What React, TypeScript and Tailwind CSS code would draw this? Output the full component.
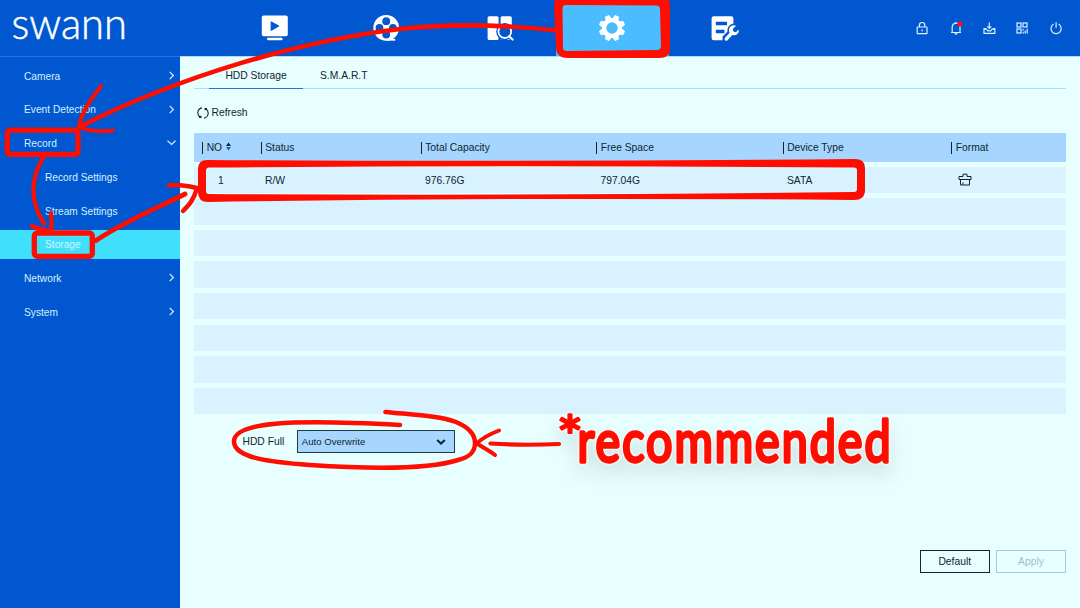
import type { ReactNode } from "react";

const FONT = "font-['Liberation_Sans',Arial,sans-serif]";

function PlayIcon() {
  return (
    <svg width="28" height="28" viewBox="0 0 28 28">
      <rect x="0.800" y="1.500" width="26" height="20.800" rx="1.800" fill="#fff" />
      <path d="M10.200 8v8.200l7.400-4.100z" fill="#0057d0" stroke="#0057d0" strokeWidth="1.200" strokeLinejoin="round" />
      <rect x="6" y="23.700" width="15.600" height="2.600" rx="1.200" fill="#fff" />
    </svg>
  );
}

function ReelIcon() {
  return (
    <svg width="28" height="28" viewBox="0 0 28 28">
      <circle cx="13.200" cy="13.800" r="12.900" fill="#fff" />
      <path d="M13.500 25h8.800v1.700h-8.800z" fill="#fff" />
      <g fill="#0057d0">
        <circle cx="13.200" cy="7.200" r="3.900" />
        <circle cx="13.200" cy="20.600" r="3.900" />
        <circle cx="6.500" cy="13.900" r="3.900" />
        <circle cx="19.900" cy="13.900" r="3.900" />
      </g>
    </svg>
  );
}

function SearchIcon() {
  return (
    <svg width="28" height="28" viewBox="0 0 28 28">
      <rect x="1.600" y="2.200" width="11" height="23.800" rx="1.600" fill="#fff" />
      <rect x="14.600" y="2.200" width="11.200" height="23.800" rx="1.600" fill="#fff" />
      <circle cx="18.800" cy="17.600" r="8.600" fill="#0057d0" />
      <path d="m24 23 4 4" stroke="#0057d0" strokeWidth="4.500" />
      <circle cx="18.800" cy="17.600" r="6.400" fill="none" stroke="#fff" strokeWidth="1.800" />
      <path d="m23.400 22.400 3.200 3.200" stroke="#fff" strokeWidth="2.100" strokeLinecap="round" />
    </svg>
  );
}

function GearIcon() {
  const angles = [22.5, 67.5, 112.5, 157.5, 202.5, 247.5, 292.5, 337.5];
  return (
    <svg width="28" height="28" viewBox="0 0 28 28">
      <g fill="#fff" stroke="#fff" strokeLinejoin="round" strokeWidth="1">
        {angles.map((a) => (
          <path key={a} d="M10.900 6 12.300 1.300h3.400L17.100 6z" transform={`rotate(${a} 14 14)`} />
        ))}
      </g>
      <circle cx="14" cy="14" r="7.900" fill="none" stroke="#fff" strokeWidth="4.400" />
    </svg>
  );
}

function MaintainIcon() {
  return (
    <svg width="30" height="28" viewBox="0 0 30 28">
      <path d="M3.800 2.200h17.400a2.200 2.200 0 0 1 2.200 2.200V9.500q-6.400 1.500-6 8.300L12.500 22.500v3.700H3.800a2.200 2.200 0 0 1-2.200-2.200V4.400a2.200 2.200 0 0 1 2.200-2.200z" fill="#fff" />
      <path d="M5.800 7.800H17v3.500H5.800zM5.800 15.800h8.700v3.500H5.800z" fill="#0057d0" />
      <path d="m16.300 25 5.500-6" stroke="#fff" strokeWidth="3.400" strokeLinecap="round" />
      <path d="M26 11.800a5 5 0 1 0 2.800 3.800l-2.900 2.600-2.600-.6-.5-2.600z" fill="#fff" />
    </svg>
  );
}

const NAV: { name: string; icon: ReactNode }[] = [
  { name: "Live", icon: <PlayIcon /> },
  { name: "Playback", icon: <ReelIcon /> },
  { name: "Search", icon: <SearchIcon /> },
  { name: "Setup", icon: <GearIcon /> },
  { name: "Maintenance", icon: <MaintainIcon /> },
];

function StatusIcons() {
  const common = {
    width: 14,
    height: 14,
    viewBox: "0 0 14 14",
    fill: "none",
    stroke: "#d8f4ff",
    strokeWidth: 1.2,
  };
  return (
    <div className="flex gap-[19.300px] pr-[17.500px]">
      <svg {...common}>
        <rect x="2.200" y="6" width="9.800" height="6.600" rx="0.700" />
        <path d="M4.400 6V4.200a2.700 2.700 0 0 1 5.400 0V6" />
        <path d="M7.100 8.400v1.800" strokeWidth="1.400" />
      </svg>
      <svg {...common}>
        <path d="M2 11.500h10M3.200 11.500V6a3.900 3.900 0 0 1 7.800 0v5.500M5.700 12.400q1.400 1.300 2.800 0M7.100 2V1" />
        <circle cx="10.800" cy="3.100" r="2.500" fill="#ff0d0d" stroke="none" />
      </svg>
      <svg {...common}>
        <path d="M4 7.500H2v4.800h10.800V7.500h-2M2.200 8.200h2.200l1.400 1.600h2.900L10.200 8.200h2.200" />
        <path d="M7.300 1.400v5.800M5.300 5.300l2 2 2-2" />
      </svg>
      <svg {...common}>
        <rect x="2" y="2" width="4" height="4" />
        <rect x="8" y="2" width="4" height="4" />
        <rect x="2" y="8" width="4" height="4" />
        <path d="M8.200 8v1.500M8.200 10.800v1.700M10.200 9.500v3M12.200 7.700v4.800" />
      </svg>
      <svg {...common}>
        <path d="M4.600 3.100a5.100 5.100 0 1 0 5 0M7.100 1.200v5.600" />
      </svg>
    </div>
  );
}

function Header() {
  return (
    <header className="flex h-14 shrink-0 items-center bg-[#0057d0]">
      <svg className="h-14 w-[218.500px] shrink-0 overflow-visible" viewBox="0 0 218.500 56" role="img">
        <text
          x="11.500"
          y="39"
          fill="#fff"
          stroke="#fff"
          strokeWidth="0.500"
          fontFamily="Lato, sans-serif"
          fontWeight="300"
          fontSize="42.500"
          textLength="115.500"
          lengthAdjust="spacingAndGlyphs"
        >
          swann
        </text>
      </svg>
      <nav className="flex h-full">
        {NAV.map((item) => (
          <button
            key={item.name}
            className={
              item.name === "Setup"
                ? "flex h-full w-[112.500px] items-center justify-center bg-[#4bbcff]"
                : "flex h-full w-[112.500px] items-center justify-center"
            }
          >
            {item.icon}
          </button>
        ))}
      </nav>
      <div className="ml-auto">
        <StatusIcons />
      </div>
    </header>
  );
}

const MENU = [
  { label: "Camera", arrow: "right" },
  { label: "Event Detection", arrow: "right" },
  { label: "Record", arrow: "down" },
  { label: "Record Settings", sub: true },
  { label: "Stream Settings", sub: true },
  { label: "Storage", sub: true, active: true },
  { label: "Network", arrow: "right" },
  { label: "System", arrow: "right" },
];

function Sidebar() {
  return (
    <aside className="flex w-[180px] shrink-0 flex-col gap-[4.750px] border-t border-[#1a78e6] bg-[#0057d0] pt-[4.300px] text-[10.200px] text-[#d3f3ff]">
      {MENU.map((m) => (
        <div
          key={m.label}
          className={`flex h-[29px] shrink-0 items-center justify-between pr-1 ${m.sub ? "pl-[45px]" : "pl-6"} ${m.active ? "bg-[#40e0fc]" : ""}`}
        >
          <span className="pt-px whitespace-nowrap">{m.label}</span>
          {m.arrow && (
            <svg className="-mt-px" width="9" height="9" viewBox="0 0 9 9" fill="none" stroke="#d3f3ff" strokeWidth="1.200">
              <path d={m.arrow === "right" ? "M2.700 0.800 6.400 4.500 2.700 8.200" : "M0.500 2.700 4.500 6.400 8.500 2.700"} />
            </svg>
          )}
        </div>
      ))}
    </aside>
  );
}

const COLS = "grid grid-cols-[58.500px_160px_175.500px_186.500px_168.500px_1fr] items-center pl-2";

function HeadCell({ children }: { children: ReactNode }) {
  return (
    <div className="flex items-center gap-[3.500px]">
      <span className="h-3 w-[1.200px] bg-[#102530]" />
      <span className="flex items-center gap-1 pt-px">{children}</span>
    </div>
  );
}

function StorageTable() {
  return (
    <div className="text-[10.300px]">
      <div className={`${COLS} h-[29px] bg-[#a6d6ff]`}>
        <HeadCell>
          NO
          <svg width="5" height="9" viewBox="0 0 5 9" className="-mt-1">
            <path d="M0 3.900 2.500 0.500 5 3.900z" fill="#102530" />
            <path d="M0 5.100 2.500 8.500 5 5.100z" fill="#0868cf" />
          </svg>
        </HeadCell>
        <HeadCell>Status</HeadCell>
        <HeadCell>Total Capacity</HeadCell>
        <HeadCell>Free Space</HeadCell>
        <HeadCell>Device Type</HeadCell>
        <HeadCell>Format</HeadCell>
      </div>
      <div className="mt-[4.600px] flex flex-col gap-[5.100px]">
        <div className={`${COLS} h-[26.500px] bg-[#d8f3ff]`}>
          <span className="pt-0.5 pl-4">1</span>
          <span className="pt-0.5 pl-[4.500px]">R/W</span>
          <span className="pt-0.5 pl-[4.500px]">976.76G</span>
          <span className="pt-0.5 pl-[4.500px]">797.04G</span>
          <span className="pt-0.5 pl-[4.500px]">SATA</span>
          <svg className="ml-[7px]" width="14" height="13" viewBox="0 0 14 13" fill="none" stroke="#102530" strokeWidth="1">
            <path d="M1 6.500V3.500h4V1.200h4v2.300h4v3zM2.500 6.500v5.500h9V6.500M5 12V9.500" />
          </svg>
        </div>
        {[2, 3, 4, 5, 6, 7, 8].map((n) => (
          <div key={n} className="h-[26.500px] bg-[#d8f3ff]" />
        ))}
      </div>
    </div>
  );
}

function Annotations() {
  return (
    <svg className="pointer-events-none absolute inset-0" width="1080" height="608" viewBox="0 0 1080 608">
      <g fill="none" stroke="#ff0d00" strokeLinecap="round" strokeLinejoin="round">
        <path d="M558 30.500C516 26 455 23 400 29C300 41 180 76 79 127" strokeWidth="4.700" />
        <path d="M101 86C92 98 81 112 79 127C89 131 101 132 113 130.500" strokeWidth="4" />
        <rect x="7.300" y="130.200" width="70.700" height="24.200" rx="3" strokeWidth="5.300" />
        <path d="M43.500 157C29 180 31 204 44 223.500" strokeWidth="4.200" />
        <path d="M32 226C38 229 43 230 51 231M51 213Q52 222 51 231" strokeWidth="4.200" />
        <rect x="34.300" y="233" width="58" height="23.300" rx="3" strokeWidth="5.300" />
        <path d="M96 240.500C125 221 155 209 185 194" strokeWidth="4.800" />
        <path d="M169 185.500C180 184 188 186 197 188C194 199 190 204 183 211" strokeWidth="4.500" />
        <path d="M385.500 412C416 415 440 416 456 422C468 427 475 434 475 443C475 452 470 457 458 460C430 469 370 469 310 465C270 462 235 458 234 442C233 422 290 419 400 425" strokeWidth="4.500" />
        <path d="M499 430.500C490 434 482 438 477 443.500C484 448 490 451 495 455" strokeWidth="4" />
        <path d="M490.500 443.500C512 445 537 445 559 444" strokeWidth="4.200" />
      </g>
      <g fill="#ff0d00" fillRule="evenodd">
        <path d="M562-3H663Q670-2 670 5V50Q669 58 660 58H568Q557 58 556 49L554 6Q554-2 562-3ZM566 5Q562.500 5 562.500 9L563 48Q563 51 567 51L657 50Q661 50 661 46L660 9Q660 5.500 656 5.500Z" />
        <path d="M207 160Q530 162 855 159Q865 159 865 168V190Q865 200 854 200Q530 197 208 202Q198 202 198 192V169Q198 160 207 160ZM209 167.500Q206 167.500 206 171V191Q206 194 209 194Q530 196 854 192Q857 192 857 189V170Q857 167.500 854 167.500Q530 165 209 167.500Z" />
      </g>
      <g
        className="[filter:drop-shadow(0_0_1px_#fff)_drop-shadow(0_0_1px_#fff)_drop-shadow(0_10px_9px_rgba(110,140,130,0.250))]"
        fontFamily="Lato, sans-serif"
        strokeLinejoin="round"
        fill="#ff0d00"
        stroke="#ff0d00"
        fontSize="58"
      >
        <text
          x="577.500"
          y="462"
          fontWeight="400"
          textLength="315"
          lengthAdjust="spacingAndGlyphs"
          strokeWidth="3.400"
          letterSpacing="2.500"
        >
          recommended
        </text>
        <text x="556.500" y="458" fontWeight="400" textLength="27" lengthAdjust="spacingAndGlyphs" strokeWidth="2.200">
          *
        </text>
      </g>
    </svg>
  );
}

export default function App() {
  return (
    <div className={`relative flex h-[608px] w-[1080px] flex-col overflow-hidden bg-[#e8ffff] text-[#102530] ${FONT}`}>
      <Header />
      <div className="flex min-h-0 flex-1">
        <Sidebar />
        <main className="flex flex-1 flex-col border-t border-[#a9dcff] pr-3.5 pl-3.5 text-[10.300px]">
          <div className="flex h-8 border-b border-[#a9ddff] pl-[15px]">
            <div className="-mb-px flex w-[94px] items-center justify-center border-b-[1.500px] border-[#1878d8] pt-1.5">
              HDD Storage
            </div>
            <div className="flex items-center pt-1.5 pl-[17px]">S.M.A.R.T</div>
          </div>
          <div className="flex h-11 shrink-0 items-center gap-[2.500px] pt-1 pl-[3px]">
            <svg width="12" height="12" viewBox="0 0 12 12" fill="none" stroke="#102530" strokeWidth="1.100">
              <path d="M5 0.900A5 5 0 0 0 3.400 10.200M2 10.400h1.900V8.700M7 11.100A5 5 0 0 0 8.600 1.800M10 1.600H8.100v1.700" />
            </svg>
            Refresh
          </div>
          <StorageTable />
          <div className="mt-4 flex items-center gap-[13px] pl-[48.500px]">
            <span>HDD Full</span>
            <button className="flex h-[23px] w-[158px] items-center justify-between border-[1.300px] border-[#1b3a42] bg-[#a6d6ff] pr-2 pl-[3.500px] text-[9.600px]">
              Auto Overwrite
              <svg width="10" height="8" viewBox="0 0 10 8" fill="none" stroke="#102530" strokeWidth="2">
                <path d="M1.200 2 5 5.600 8.800 2" />
              </svg>
            </button>
          </div>
          <div className="mt-auto mb-[35px] flex justify-end gap-1.5">
            <button className="h-[23px] w-[70.500px] border border-[#102530] pt-px text-[10.300px]">Default</button>
            <button className="h-[23px] w-[70px] border border-[#a6c8e2] pt-px text-[10.300px] text-[#a3bdd0]">Apply</button>
          </div>
        </main>
      </div>
      <Annotations />
    </div>
  );
}
